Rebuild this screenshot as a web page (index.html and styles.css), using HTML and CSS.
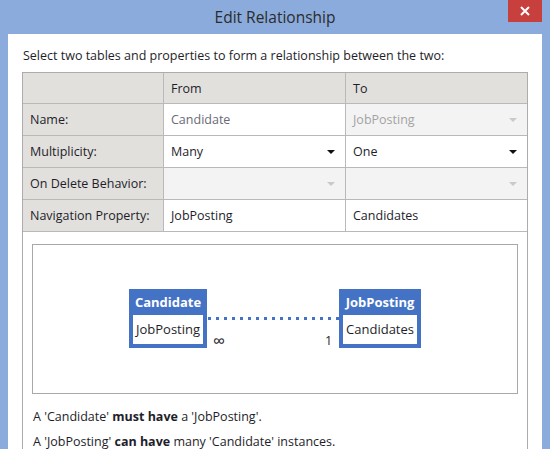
FILE: index.html
```html
<!DOCTYPE html>
<html>
<head>
<meta charset="utf-8">
<link rel="stylesheet" href="styles.css">
</head>
<body>
<div class="titlebar">
  <span class="spacer"></span>
  <span class="title">Edit Relationship</span>
  <div class="close-wrap">
    <div class="close">
      <svg width="10" height="10" viewBox="0 0 10 10"><path d="M1 1 L9 9 M9 1 L1 9" stroke="#fff" stroke-width="2" fill="none"/></svg>
    </div>
  </div>
</div>
<div class="window">
  <p class="intro">Select two tables and properties to form a relationship between the two:</p>
  <div class="panel">
    <div class="grid">
      <div class="cell head"></div>
      <div class="cell head">From</div>
      <div class="cell head">To</div>

      <div class="cell label">Name:</div>
      <div class="cell value name-from">Candidate</div>
      <div class="cell value disabled"><span class="muted">JobPosting</span><span class="arrow light"></span></div>

      <div class="cell label">Multiplicity:</div>
      <div class="cell value"><span>Many</span><span class="arrow"></span></div>
      <div class="cell value"><span>One</span><span class="arrow"></span></div>

      <div class="cell label">On Delete Behavior:</div>
      <div class="cell value disabled"><span></span><span class="arrow light"></span></div>
      <div class="cell value disabled"><span></span><span class="arrow light"></span></div>

      <div class="cell label">Navigation Property:</div>
      <div class="cell value">JobPosting</div>
      <div class="cell value">Candidates</div>
    </div>
    <div class="diagram">
      <div class="entity">
        <div class="entity-head">Candidate</div>
        <div class="entity-body">JobPosting</div>
      </div>
      <div class="connector">
        <div class="dots"></div>
        <div class="ends"><span class="inf">∞</span><span>1</span></div>
      </div>
      <div class="entity">
        <div class="entity-head">JobPosting</div>
        <div class="entity-body">Candidates</div>
      </div>
    </div>
    <p class="stmt">A 'Candidate' <b>must have</b> a 'JobPosting'.</p>
    <p class="stmt">A 'JobPosting' <b>can have</b> many 'Candidate' instances.</p>
  </div>
</div>
</body>
</html>
```

FILE: styles.css
```css
html, body {
  margin: 0;
  padding: 0;
  height: 100%;
  overflow: hidden;
}
body {
  background: #8aabdc;
  font-family: "Open Sans", "Noto Sans", sans-serif;
  font-size: 12.5px;
  color: #1e1e2a;
}
.titlebar {
  height: 34px;
  display: grid;
  grid-template-columns: 1fr auto 1fr;
  align-items: start;
}
.title {
  font-size: 15.5px;
  color: #2b2b2b;
  line-height: 35px;
}
.close-wrap {
  display: flex;
  justify-content: flex-end;
  padding-right: 8px;
}
.close {
  width: 34px;
  height: 22px;
  background: #c7403d;
  display: flex;
  align-items: center;
  justify-content: center;
}
.window {
  background: #fff;
  margin: 0 8px;
  height: 415px;
  padding-top: 14px;
  box-sizing: border-box;
}
.intro {
  margin: 0 0 8px 15px;
  line-height: 16px;
}
.panel {
  margin-left: 14px;
  width: 506px;
  box-sizing: border-box;
  border: 1px solid #acacac;
  border-bottom: none;
  height: 377px;
}
.grid {
  display: grid;
  grid-template-columns: 140px 181px 181px;
  grid-template-rows: 30px 31px 31px 31px 31px;
  gap: 1px;
  background: #b9b9b9;
  border-bottom: 1px solid #b9b9b9;
}
.cell {
  display: flex;
  align-items: center;
  justify-content: space-between;
  padding: 0 8px 0 7px;
  background: #fff;
}
.head, .label {
  background: #e2e0dd;
}
.value.disabled {
  background: #f3f3f3;
}
.name-from {
  color: #6a6a78;
}
.muted {
  color: #a3a3a3;
}
.arrow {
  width: 0;
  height: 0;
  border-left: 4px solid transparent;
  border-right: 4px solid transparent;
  border-top: 4px solid #111;
  margin-right: 2px;
}
.arrow.light {
  border-top-color: #c9c9c9;
}
.diagram {
  margin: 12px 9px 0;
  height: 150px;
  box-sizing: border-box;
  border: 1px solid #a8a8a8;
  display: flex;
  justify-content: center;
  align-items: flex-start;
  padding-top: 44px;
}
.entity {
  background: #4472c4;
  padding: 0 4px 4px;
}
.entity-head {
  color: #fff;
  font-weight: bold;
  text-align: center;
  line-height: 26px;
  font-size: 13px;
  padding: 0 1px;
}
.entity-body {
  background: #fff;
  line-height: 29px;
  padding: 0 3px;
  font-size: 13px;
}
.connector {
  width: 132px;
  margin-top: 28px;
  display: flex;
  flex-direction: column;
}
.dots {
  height: 3px;
  background: repeating-linear-gradient(to right, #4472c4 0 3px, transparent 3px 8px);
  margin-left: 1px;
}
.ends {
  display: flex;
  justify-content: space-between;
  align-items: center;
  padding: 0 7px 0 6px;
  margin-top: 12px;
  line-height: 18px;
}
.inf {
  font-size: 17px;
}
.stmt {
  margin: 0;
  padding-left: 10px;
  line-height: 25px;
}
.diagram + .stmt {
  margin-top: 10px;
}
```
